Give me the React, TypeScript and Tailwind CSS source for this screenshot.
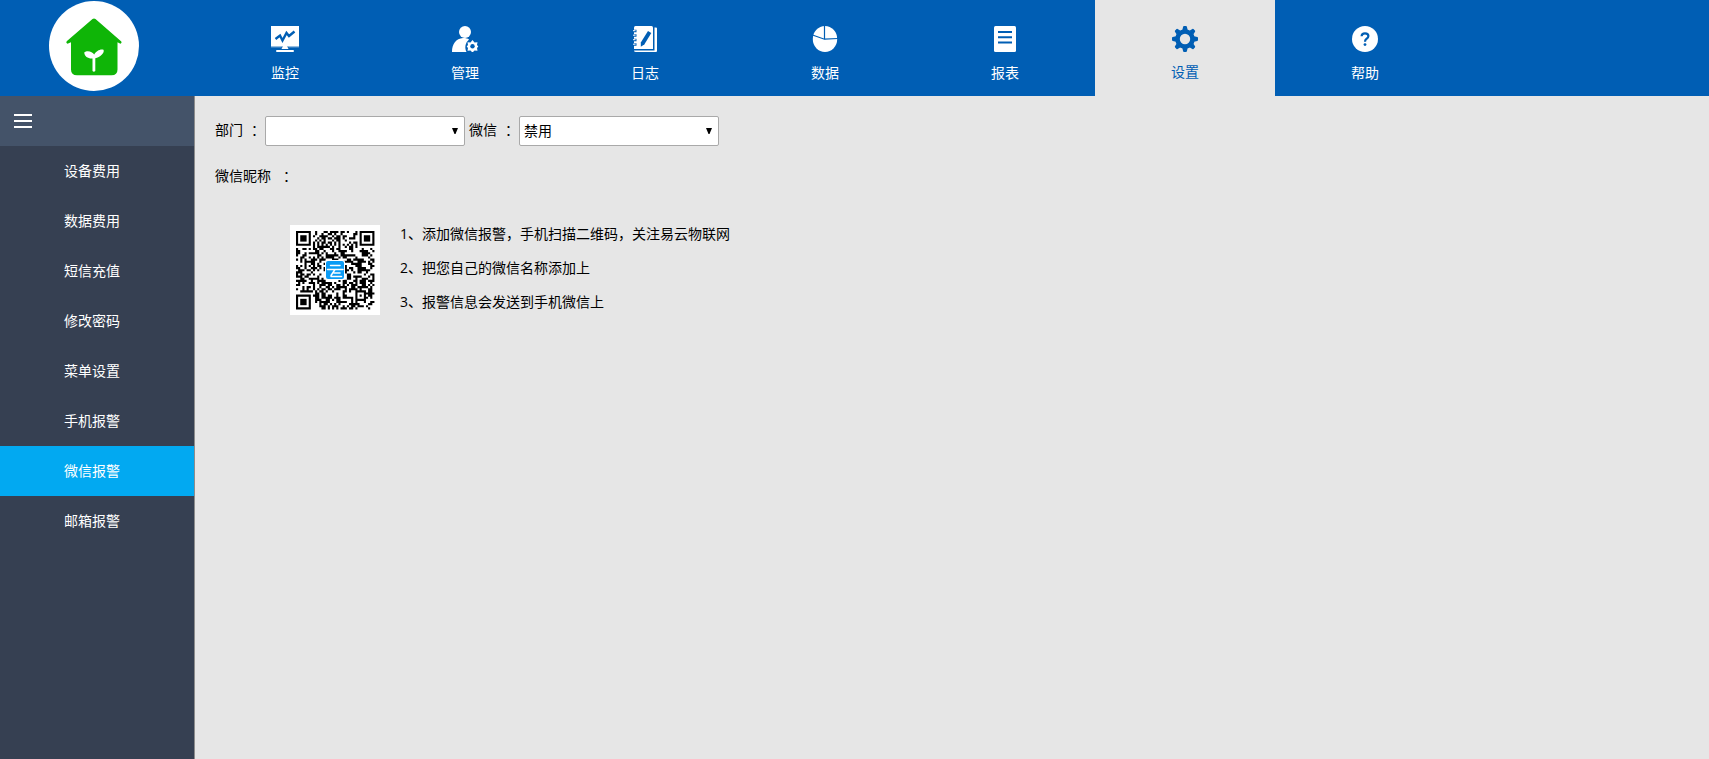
import React, { useState } from 'react';

interface IconProps {
  className?: string;
}

const LogoIcon: React.FC<IconProps> = ({ className }) => (
  <svg viewBox="0 0 90 90" className={className} aria-hidden="true">
    <circle cx="45" cy="45" r="45" fill="#fff" />
    <path
      d="M43.500 18Q45 16.800 46.500 18L72.300 40.500Q73.200 42 71.500 42.800L68.500 41.300V68.500Q68.500 74.300 62.500 74.300H28Q22 74.300 22 68.500V41.300L18.500 42.800Q16.500 42 17.700 40.200Z"
      fill="#0fb507"
    />
    <path
      d="M45.200 53.500C47 50 51.500 47.500 54.500 48.700C56 51.500 51 56.500 46.300 57.300V70Q44.800 71.500 43.500 70V57.500C39 57.800 35.500 55.500 35.200 51.500C38 49 43.500 50.500 45.200 53.500Z"
      fill="#fff"
    />
  </svg>
);

const MonitorIcon: React.FC<IconProps> = ({ className }) => (
  <svg viewBox="0 0 28 26" className={className} aria-hidden="true">
    <path d="M0 0H28V20.500H0Z" fill="currentColor" />
    <path d="M12 20H16L17.500 23H10.500Z" fill="currentColor" />
    <path d="M0 21H10.500M17.500 21H28" stroke="currentColor" strokeWidth="1" opacity="0.4" />
    <rect x="5" y="24" width="18" height="2" rx="1" fill="currentColor" />
    <path d="M4.500 13L9 9.500L11.500 14.500L15.500 7L18 10L23.500 5.500" fill="none" stroke="#005eb4" strokeWidth="2.400" />
  </svg>
);

const UserIcon: React.FC<IconProps> = ({ className }) => (
  <svg viewBox="0 0 28 26" className={className} aria-hidden="true">
    <circle cx="14" cy="6" r="6" fill="currentColor" />
    <path d="M1 26C1 18 5 12.500 12 12C15 12 17 12.500 18 13.500C14 17 13.500 22 15.500 26Z" fill="currentColor" />
    <path d="M21.500 14L23.500 16.500L26.500 16.200L26 19L27.300 20.500L26 22L26.500 24.800L23.500 24.500L21.500 26.500L19.500 24.500L16.500 24.800L17 22L15.700 20.500L17 19L16.500 16.200L19.500 16.500Z" fill="currentColor" />
    <circle cx="21.500" cy="20.300" r="2.200" fill="#005eb4" />
  </svg>
);

const LogIcon: React.FC<IconProps> = ({ className }) => (
  <svg viewBox="0 0 28 26" className={className} aria-hidden="true">
    <path d="M23.500 1.500H25Q26 1.500 26 2.500V25Q26 26 25 26H5Q3 26 3 24.500H23.500Z" fill="currentColor" />
    <path d="M4.500 0H20.500Q22 0 22 1.500V23H3V1.500Q3 0 4.500 0Z" fill="currentColor" />
    <path d="M2 5H5.500M2 9.500H5.500M2 14H5.500M2 18.500H5.500" stroke="#005eb4" strokeWidth="2.500" />
    <path d="M2 4.700H4.500M2 9.200H4.500M2 13.700H4.500M2 18.200H4.500" stroke="currentColor" strokeWidth="1" />
    <path d="M17 5L20.300 7L13.300 18.500L9.800 20.800L9.800 16.500Z" fill="#005eb4" />
  </svg>
);

const PieIcon: React.FC<IconProps> = ({ className }) => (
  <svg viewBox="0 0 28 26" className={className} aria-hidden="true">
    <ellipse cx="14" cy="13" rx="12.200" ry="13" fill="currentColor" />
    <path d="M13.500 0V13.200L1.500 9M13.500 13.200L27 12.500" fill="none" stroke="#005eb4" strokeWidth="1.200" />
  </svg>
);

const ReportIcon: React.FC<IconProps> = ({ className }) => (
  <svg viewBox="0 0 28 26" className={className} aria-hidden="true">
    <rect x="3" width="22" height="26" rx="1.500" fill="currentColor" />
    <path d="M7 6H21M7 11.200H21M7 16.400H21" stroke="#005eb4" strokeWidth="2" />
  </svg>
);

const GearIcon: React.FC<IconProps> = ({ className }) => (
  <svg viewBox="-14 -13 28 26" className={className} aria-hidden="true">
    <circle r="7.500" fill="none" stroke="currentColor" strokeWidth="4.600" />
    {[0, 45, 90, 135, 180, 225, 270, 315].map((angle) => (
      <path key={angle} d="M-2.700 -9L-1.900 -12.300Q-1.700 -13 -1 -13H1Q1.700 -13 1.900 -12.300L2.700 -9Z" transform={`rotate(${angle})`} fill="currentColor" />
    ))}
  </svg>
);

const HelpIcon: React.FC<IconProps> = ({ className }) => (
  <svg viewBox="0 0 28 26" className={className} aria-hidden="true">
    <circle cx="14" cy="13" r="13" fill="currentColor" />
    <path d="M10.600 10.200Q10.700 7.300 14 7.300Q17.400 7.300 17.400 10Q17.400 11.600 15.600 12.700Q14 13.700 14 15.700" fill="none" stroke="#005eb4" strokeWidth="2.200" />
    <circle cx="14" cy="18.600" r="1.400" fill="#005eb4" />
  </svg>
);

const NAV_ITEMS = [
  { label: '监控', Icon: MonitorIcon },
  { label: '管理', Icon: UserIcon },
  { label: '日志', Icon: LogIcon },
  { label: '数据', Icon: PieIcon },
  { label: '报表', Icon: ReportIcon },
  { label: '设置', Icon: GearIcon },
  { label: '帮助', Icon: HelpIcon },
];

const MENU_ITEMS = ['设备费用', '数据费用', '短信充值', '修改密码', '菜单设置', '手机报警', '微信报警', '邮箱报警'];

const QR_SIZE = 37;

const inFinder = (x: number, y: number) =>
  (x < 8 && y < 8) || (x > QR_SIZE - 9 && y < 8) || (x < 8 && y > QR_SIZE - 9);

const isDark = (x: number, y: number) => {
  if (inFinder(x, y)) return false;
  const ring = Math.max(Math.abs(x - 30), Math.abs(y - 30));
  if (ring <= 2) return ring !== 1;
  if (x === 6 || y === 6) return (x + y) % 2 === 0;
  let h = (x * 374761393 + y * 668265263) | 0;
  h = Math.imul(h ^ (h >>> 13), 1274126177);
  return ((h ^ (h >>> 16)) & 255) < 132;
};

const qrPath = Array.from({ length: QR_SIZE * QR_SIZE }, (_, i) => [i % QR_SIZE, Math.floor(i / QR_SIZE)])
  .filter(([x, y]) => isDark(x, y))
  .map(([x, y]) => `M${x} ${y}h1v1h-1z`)
  .join('');

const QrCode: React.FC<IconProps> = ({ className }) => (
  <svg viewBox="0 0 90 90" className={className} role="img" aria-label="二维码">
    <rect width="90" height="90" fill="#fff" />
    <g transform="translate(6 6) scale(2.120)">
      <path d={qrPath} fill="#000" />
      {[[0, 0], [30, 0], [0, 30]].map(([x, y]) => (
        <g key={`${x}-${y}`} transform={`translate(${x} ${y})`}>
          <path d="M0.500 0.500H6.500V6.500H0.500Z" fill="none" stroke="#000" />
          <rect x="2" y="2" width="3" height="3" />
        </g>
      ))}
    </g>
    <rect x="35" y="35" width="20" height="20" rx="2" fill="#fff" />
    <rect x="36" y="36" width="18" height="18" rx="2" fill="#0a9bf5" />
    <path d="M40.500 40.500H50M37.500 44.500H53M45 44.500L41 50.500M44 48H50M41 51.500H51.500" fill="none" stroke="#fff" strokeWidth="1.500" strokeLinecap="round" />
  </svg>
);

interface SelectBoxProps {
  id: string;
  options: string[];
}

const SelectBox: React.FC<SelectBoxProps> = ({ id, options }) => (
  <span className="relative inline-block">
    <select id={id} className="block w-[200px] h-[30px] appearance-none rounded-xs border border-[#a9a9a9] bg-white px-1 text-sm text-black">
      {options.map((o) => (
        <option key={o}>{o}</option>
      ))}
    </select>
    <svg viewBox="0 0 6 6" className="pointer-events-none absolute right-[7px] top-3 w-[6px] h-[6px]" aria-hidden="true">
      <path d="M0 0H6L3.500 6H2.500Z" fill="#000" />
    </svg>
  </span>
);

const App: React.FC = () => {
  const [activeNav, setActiveNav] = useState('设置');
  const [activeMenu, setActiveMenu] = useState('微信报警');

  return (
    <div lang="zh-CN" className="flex min-h-screen flex-col bg-[#e6e6e6] text-sm text-black font-['Open_Sans','Noto_Sans_CJK_SC',sans-serif]">
      <header className="flex h-24 bg-[#005eb4]">
        <div className="w-[195px] shrink-0 pt-px pl-[49px]">
          <LogoIcon className="w-[90px] h-[90px]" />
        </div>
        <nav className="flex">
          {NAV_ITEMS.map(({ label, Icon }) => (
            <button
              key={label}
              type="button"
              onClick={() => setActiveNav(label)}
              className={`flex w-[180px] flex-col items-center pt-[26px] ${
                activeNav === label ? 'gap-2 bg-[#e6e6e6] text-[#005eb4]' : 'gap-[9px] text-white'
              }`}
            >
              <Icon className="w-7 h-[26px]" />
              <span className="leading-6">{label}</span>
            </button>
          ))}
        </nav>
      </header>

      <div className="flex flex-1">
        <aside className="w-[195px] shrink-0 border-r border-[#8c8c8c] bg-[#364052] text-white">
          <button type="button" aria-label="菜单" className="flex h-[50px] w-full flex-col justify-center gap-1 bg-[#445369] pl-[14px]">
            <span className="h-[2px] w-[18px] bg-white" />
            <span className="h-[2px] w-[18px] bg-white" />
            <span className="h-[2px] w-[18px] bg-white" />
          </button>
          <ul>
            {MENU_ITEMS.map((item) => (
              <li key={item}>
                <a
                  href="#"
                  onClick={() => setActiveMenu(item)}
                  className={`block h-[50px] pl-16 leading-[50px] ${activeMenu === item ? 'bg-[#02a9f1]' : ''}`}
                >
                  {item}
                </a>
              </li>
            ))}
          </ul>
        </aside>

        <main className="flex-1 px-5 pt-5">
          <div className="flex items-center">
            <label htmlFor="dept" className="flex gap-2 pb-0.5">部门<span>：</span></label>
            <SelectBox id="dept" options={['']} />
            <label htmlFor="wechat" className="flex gap-2 pb-0.5 pl-1">微信<span>：</span></label>
            <SelectBox id="wechat" options={['禁用', '启用']} />
          </div>

          <div className="mt-5 flex gap-3 leading-5">
            <span>微信昵称</span>
            <span>：</span>
          </div>

          <div className="mt-[39px] ml-[75px] flex gap-5">
            <QrCode className="w-[90px] h-[90px]" />
            <ol className="-mt-2 leading-[34px]">
              <li>1、添加微信报警，手机扫描二维码，关注易云物联网</li>
              <li>2、把您自己的微信名称添加上</li>
              <li>3、报警信息会发送到手机微信上</li>
            </ol>
          </div>
        </main>
      </div>
    </div>
  );
};

export default App;
